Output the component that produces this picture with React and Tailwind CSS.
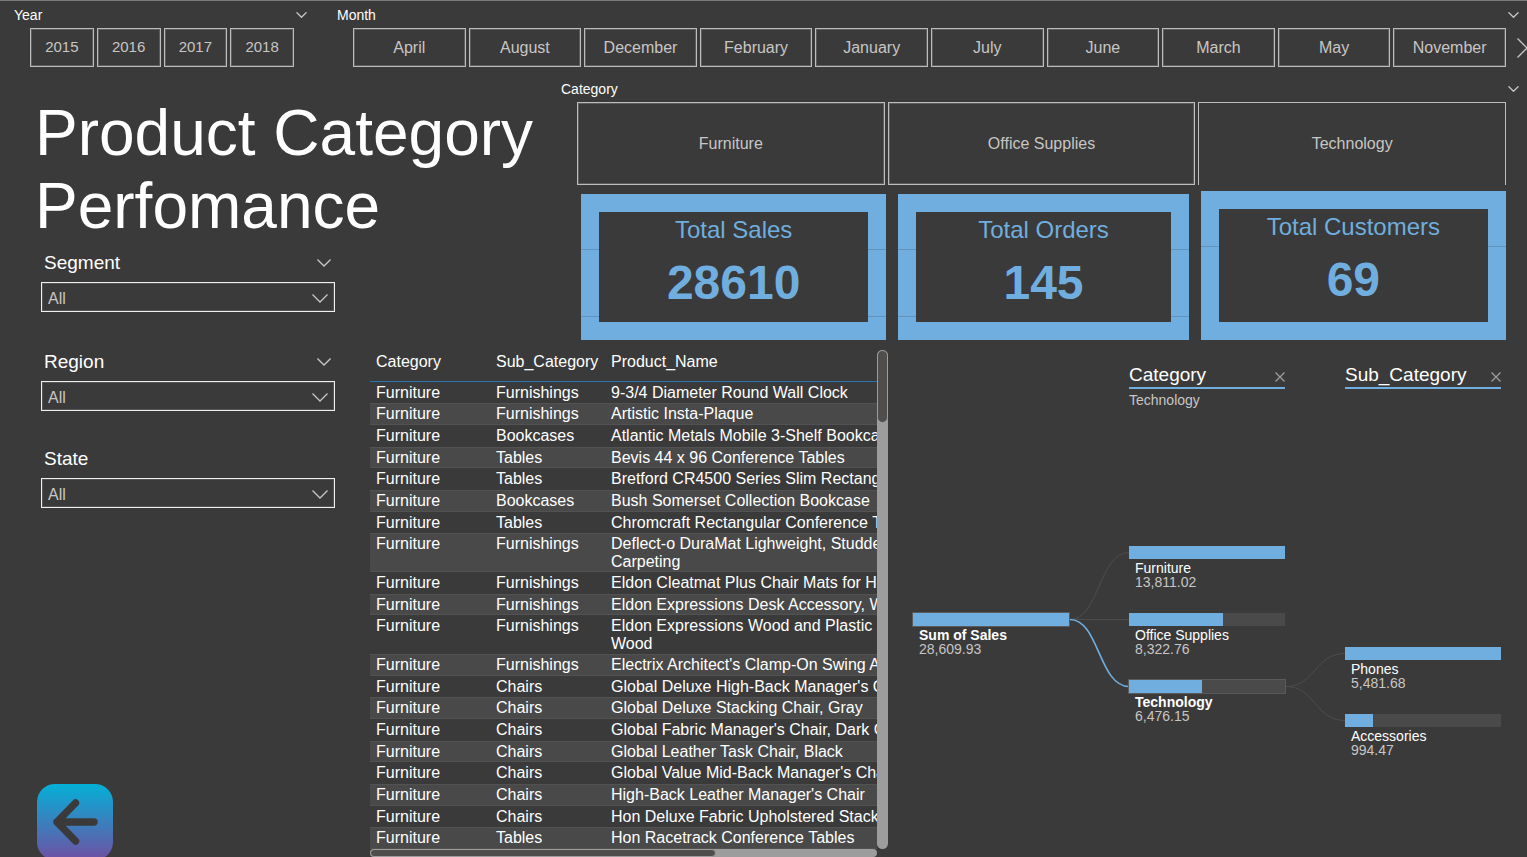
import { useState } from "react";
import clsx from "clsx";

const years = ["2015", "2016", "2017", "2018"];
const months = [
  "April",
  "August",
  "December",
  "February",
  "January",
  "July",
  "June",
  "March",
  "May",
  "November",
];
const categories = ["Furniture", "Office Supplies", "Technology"];

const products = [
  ["Furnishings", "9-3/4 Diameter Round Wall Clock"],
  ["Furnishings", "Artistic Insta-Plaque"],
  ["Bookcases", "Atlantic Metals Mobile 3-Shelf Bookcases"],
  ["Tables", "Bevis 44 x 96 Conference Tables"],
  ["Tables", "Bretford CR4500 Series Slim Rectangular Table"],
  ["Bookcases", "Bush Somerset Collection Bookcase"],
  ["Tables", "Chromcraft Rectangular Conference Tables"],
  ["Furnishings", "Deflect-o DuraMat Lighweight, Studded,\nCarpeting"],
  ["Furnishings", "Eldon Cleatmat Plus Chair Mats for High Pile"],
  ["Furnishings", "Eldon Expressions Desk Accessory, Wood"],
  ["Furnishings", "Eldon Expressions Wood and Plastic Desk\nWood"],
  ["Furnishings", "Electrix Architect's Clamp-On Swing Arm Lamp"],
  ["Chairs", "Global Deluxe High-Back Manager's Chair"],
  ["Chairs", "Global Deluxe Stacking Chair, Gray"],
  ["Chairs", "Global Fabric Manager's Chair, Dark Gray"],
  ["Chairs", "Global Leather Task Chair, Black"],
  ["Chairs", "Global Value Mid-Back Manager's Chair"],
  ["Chairs", "High-Back Leather Manager's Chair"],
  ["Chairs", "Hon Deluxe Fabric Upholstered Stacking Chairs"],
  ["Tables", "Hon Racetrack Conference Tables"],
];

// x / y are positions on the tree canvas
const nodes = [
  { name: "Sum of Sales", value: 28609.93, max: 28609.93, x: 0, y: 203, active: true },
  { name: "Furniture", value: 13811.02, max: 13811.02, x: 216, y: 136 },
  { name: "Office Supplies", value: 8322.76, max: 13811.02, x: 216, y: 203 },
  { name: "Technology", value: 6476.15, max: 13811.02, x: 216, y: 270, active: true },
  { name: "Phones", value: 5481.68, max: 5481.68, x: 432, y: 237 },
  { name: "Accessories", value: 994.47, max: 5481.68, x: 432, y: 304 },
];

function Chevron({ className }) {
  return (
    <svg
      viewBox="0 0 16 9"
      fill="none"
      stroke="#c8c6c4"
      strokeWidth="1.3"
      className={className}
      aria-hidden="true"
    >
      <path d="M0.5 0.5 8 8 15.5 0.5" vectorEffect="non-scaling-stroke" />
    </svg>
  );
}

function Slicer({ title, options, className, tileClass }) {
  const [selected, setSelected] = useState(null);

  return (
    <section className={className}>
      <div className="flex h-[27px] items-center justify-between pr-[2px]">
        <h2 className="text-sm leading-5 text-white">{title}</h2>
        <Chevron className="h-[6px] w-[11px]" />
      </div>
      <div className="ml-4 mr-[15px] flex gap-[3px]">
        {options.map((option) => (
          <button
            key={option}
            type="button"
            aria-pressed={selected === option}
            onClick={() => setSelected(selected === option ? null : option)}
            className={clsx(
              "min-w-0 flex-1 border border-[#bdbdbd] text-[#c8c6c4] shadow-[inset_0_0_0_1px_#5c5c5c]",
              tileClass
            )}
          >
            {option}
          </button>
        ))}
      </div>
    </section>
  );
}

function Filter({ id, title, collapsible }) {
  return (
    <div className="w-[294px]">
      <div className="flex h-[39px] items-center justify-between pl-[3px] pr-1">
        <label htmlFor={id} className="text-[19px] leading-6 text-white">
          {title}
        </label>
        {collapsible && <Chevron className="h-[8px] w-[14px]" />}
      </div>
      <div className="relative">
        <select
          id={id}
          className="block h-[30px] w-full appearance-none border border-[#f0f0f0] bg-[#3a3a3a] pt-[3px] pl-[6px] text-base text-[#c8c6c4] shadow-[inset_0_0_0_1px_#555555]"
        >
          <option>All</option>
        </select>
        <Chevron className="pointer-events-none absolute right-[7px] top-[12px] h-[9px] w-4" />
      </div>
    </div>
  );
}

function Card({ title, value, className, seams }) {
  return (
    <div
      className={clsx(
        "relative border-[18px] border-[#70aedf] pt-1 text-center text-[#70aedf]",
        className
      )}
    >
      <h3 className="text-2xl leading-7">{title}</h3>
      <p className="mt-[10px] text-5xl leading-[58px] font-bold">{value}</p>
      {seams.map((seam) => (
        <div
          key={seam}
          className={clsx(
            "absolute -inset-x-[18px] h-px border-x-[18px] border-[#5f93bd]",
            seam
          )}
        />
      ))}
    </div>
  );
}

function ProductTable() {
  return (
    <section className="flex w-[518px] shrink-0 flex-col pt-[10px]">
      <div className="flex h-[499px]">
        <div className="min-w-0 flex-1 overflow-hidden">
          <table className="w-full table-fixed border-collapse text-left text-base leading-[18px] text-white">
            <colgroup>
              <col className="w-[120px]" />
              <col className="w-[115px]" />
              <col />
            </colgroup>
            <thead>
              <tr className="h-[31px] border-b border-[#2576b0] align-top">
                <th className="pt-[3px] pl-[6px] font-normal">Category</th>
                <th className="pt-[3px] pl-[6px] font-normal">Sub_Category</th>
                <th className="pt-[3px] pl-[6px] font-normal">Product_Name</th>
              </tr>
            </thead>
            <tbody>
              {products.map(([sub, name]) => (
                <tr
                  key={name}
                  className="h-[22px] align-top whitespace-pre nth-[3n+1]:h-[21px] even:bg-[#494949] even:shadow-[inset_0_1px_#525252,inset_0_-1px_#525252]"
                >
                  <td className="pt-[2px] pb-px pl-[6px]">Furniture</td>
                  <td className="pt-[2px] pb-px pl-[6px]">{sub}</td>
                  <td className="pt-[2px] pb-px pl-[6px]">{name}</td>
                </tr>
              ))}
            </tbody>
          </table>
        </div>
        <div className="w-[11px] rounded-full bg-[#9d9d9d]">
          <div className="h-[73px] rounded-full border border-[#9d9d9d] bg-[#4f4e4d]" />
        </div>
      </div>
      <div className="mr-[11px] h-[11px] rounded-full bg-[#9d9d9d]">
        <div className="h-full w-[346px] rounded-full border border-[#9d9d9d] bg-[#4f4e4d]" />
      </div>
    </section>
  );
}

function LevelHeader({ title, selected }) {
  return (
    <div className="w-[156px]">
      <div className="flex h-[25px] items-start justify-between border-b-2 border-[#70aedf]">
        <h3 className="text-[19px] leading-[22px] text-white">{title}</h3>
        <button type="button" aria-label={`Remove ${title}`} className="pt-2">
          <svg viewBox="0 0 10 10" className="size-[10px]" stroke="#a0a0a0" strokeWidth="1.2">
            <path d="M0.5 0.5 9.5 9.5M9.5 0.5 0.5 9.5" />
          </svg>
        </button>
      </div>
      <p className="h-[21px] text-sm leading-[22px] text-[#c8c6c4]">{selected}</p>
    </div>
  );
}

function TreeNode({ node }) {
  const { name, value, max, x, y, active } = node;

  return (
    <div className="absolute w-[156px] text-sm leading-[14px]" style={{ left: x, top: y }}>
      <div
        className={clsx(
          "h-[13px] bg-[#4a4a4a]",
          active && "outline outline-[#5a5a5a]"
        )}
      >
        <div
          className="h-full bg-[#70aedf]"
          style={{ width: `${(value / max) * 100}%` }}
        />
      </div>
      <p className={clsx("mt-[2px] pl-[6px] text-white", active && "font-bold")}>
        {name}
      </p>
      <p className="pl-[6px] text-[#c8c6c4]">
        {value.toLocaleString("en-US", { minimumFractionDigits: 2 })}
      </p>
    </div>
  );
}

function SalesTree() {
  return (
    <section className="min-w-0 flex-1 pt-[24px] pl-[25px]">
      <div className="flex gap-[60px] pl-[216px]">
        <LevelHeader title="Category" selected="Technology" />
        <LevelHeader title="Sub_Category" />
      </div>
      <div className="relative h-[360px] w-[588px]">
        <svg
          viewBox="0 0 588 360"
          fill="none"
          stroke="#4d4d4d"
          className="h-full w-full"
          aria-hidden="true"
        >
          <path d="M157 209.5C186 209.5 186 142.5 216 142.5" />
          <path d="M157 209.5H216" />
          <path d="M373 276.5C402 276.5 402 243.5 432 243.5" />
          <path d="M373 276.5C402 276.5 402 310.5 432 310.5" />
          <path d="M157 209.5C186 209.5 186 276.5 216 276.5" stroke="#70aedf" strokeWidth="1.6" />
        </svg>
        {nodes.map((node) => (
          <TreeNode key={node.name} node={node} />
        ))}
      </div>
    </section>
  );
}

export default function App() {
  return (
    <main className="flex h-screen flex-col overflow-hidden border-t border-[#7a7a7a] bg-[#3a3a3a] font-['Liberation_Sans',Arial,sans-serif]">
      <header className="relative flex gap-7 pr-[6px] pl-[14px]">
        <Slicer
          title="Year"
          options={years}
          className="w-[295px]"
          tileClass="h-[39px] text-[15px]"
        />
        <Slicer
          title="Month"
          options={months}
          className="min-w-0 flex-1"
          tileClass="h-[39px] text-base"
        />
        <button
          type="button"
          aria-label="More months"
          className="absolute right-0 bottom-[9px]"
        >
          <svg viewBox="0 0 10 20" className="h-5 w-[10px]" fill="none" stroke="#c8c6c4" strokeWidth="1.3">
            <path d="M0.5 0.5 10 10 0.5 19.5" />
          </svg>
        </button>
      </header>

      <div className="flex">
        <div className="w-[561px] shrink-0 pt-[30px]">
          <h1 className="pl-[35px] text-[64px] leading-[73px] text-white">
            Product Category
            <br />
            Perfomance
          </h1>
          <div className="pl-[41px]">
            <Filter id="segment" title="Segment" collapsible />
          </div>
        </div>
        <div className="min-w-0 flex-1 pt-2 pr-[6px]">
          <Slicer
            title="Category"
            options={categories}
            tileClass="h-[83px] text-base last:border-b-0 last:shadow-none"
          />
          <div className="flex h-[155px] items-end gap-3 pr-[15px] pl-5">
            <Card
              title="Total Sales"
              value="28610"
              className="h-[146px] flex-[306]"
              seams={["top-[37px]", "top-[104px]"]}
            />
            <Card
              title="Total Orders"
              value="145"
              className="h-[146px] flex-[289]"
              seams={["top-[37px]", "top-[104px]"]}
            />
            <Card
              title="Total Customers"
              value="69"
              className="h-[149px] flex-[306]"
              seams={["top-[37px]"]}
            />
          </div>
        </div>
      </div>

      <div className="flex min-h-0 flex-1">
        <aside className="flex w-[370px] shrink-0 flex-col gap-7 pt-[2px] pl-[41px]">
          <Filter id="region" title="Region" collapsible />
          <Filter id="state" title="State" />
          <button
            type="button"
            aria-label="Back"
            className="mt-auto -mb-[3px] -ml-1 size-[76px] shrink-0 rounded-[18px] bg-linear-to-b/srgb from-[#04b0d6] to-[#6f50a4]"
          >
            <svg
              viewBox="0 0 76 76"
              fill="none"
              stroke="#3a3a3a"
              strokeWidth="7.4"
              strokeLinecap="round"
              strokeLinejoin="round"
            >
              <path d="M38.5 19 20 38 38.5 57M20 38H57" />
            </svg>
          </button>
        </aside>
        <ProductTable />
        <SalesTree />
      </div>
    </main>
  );
}
